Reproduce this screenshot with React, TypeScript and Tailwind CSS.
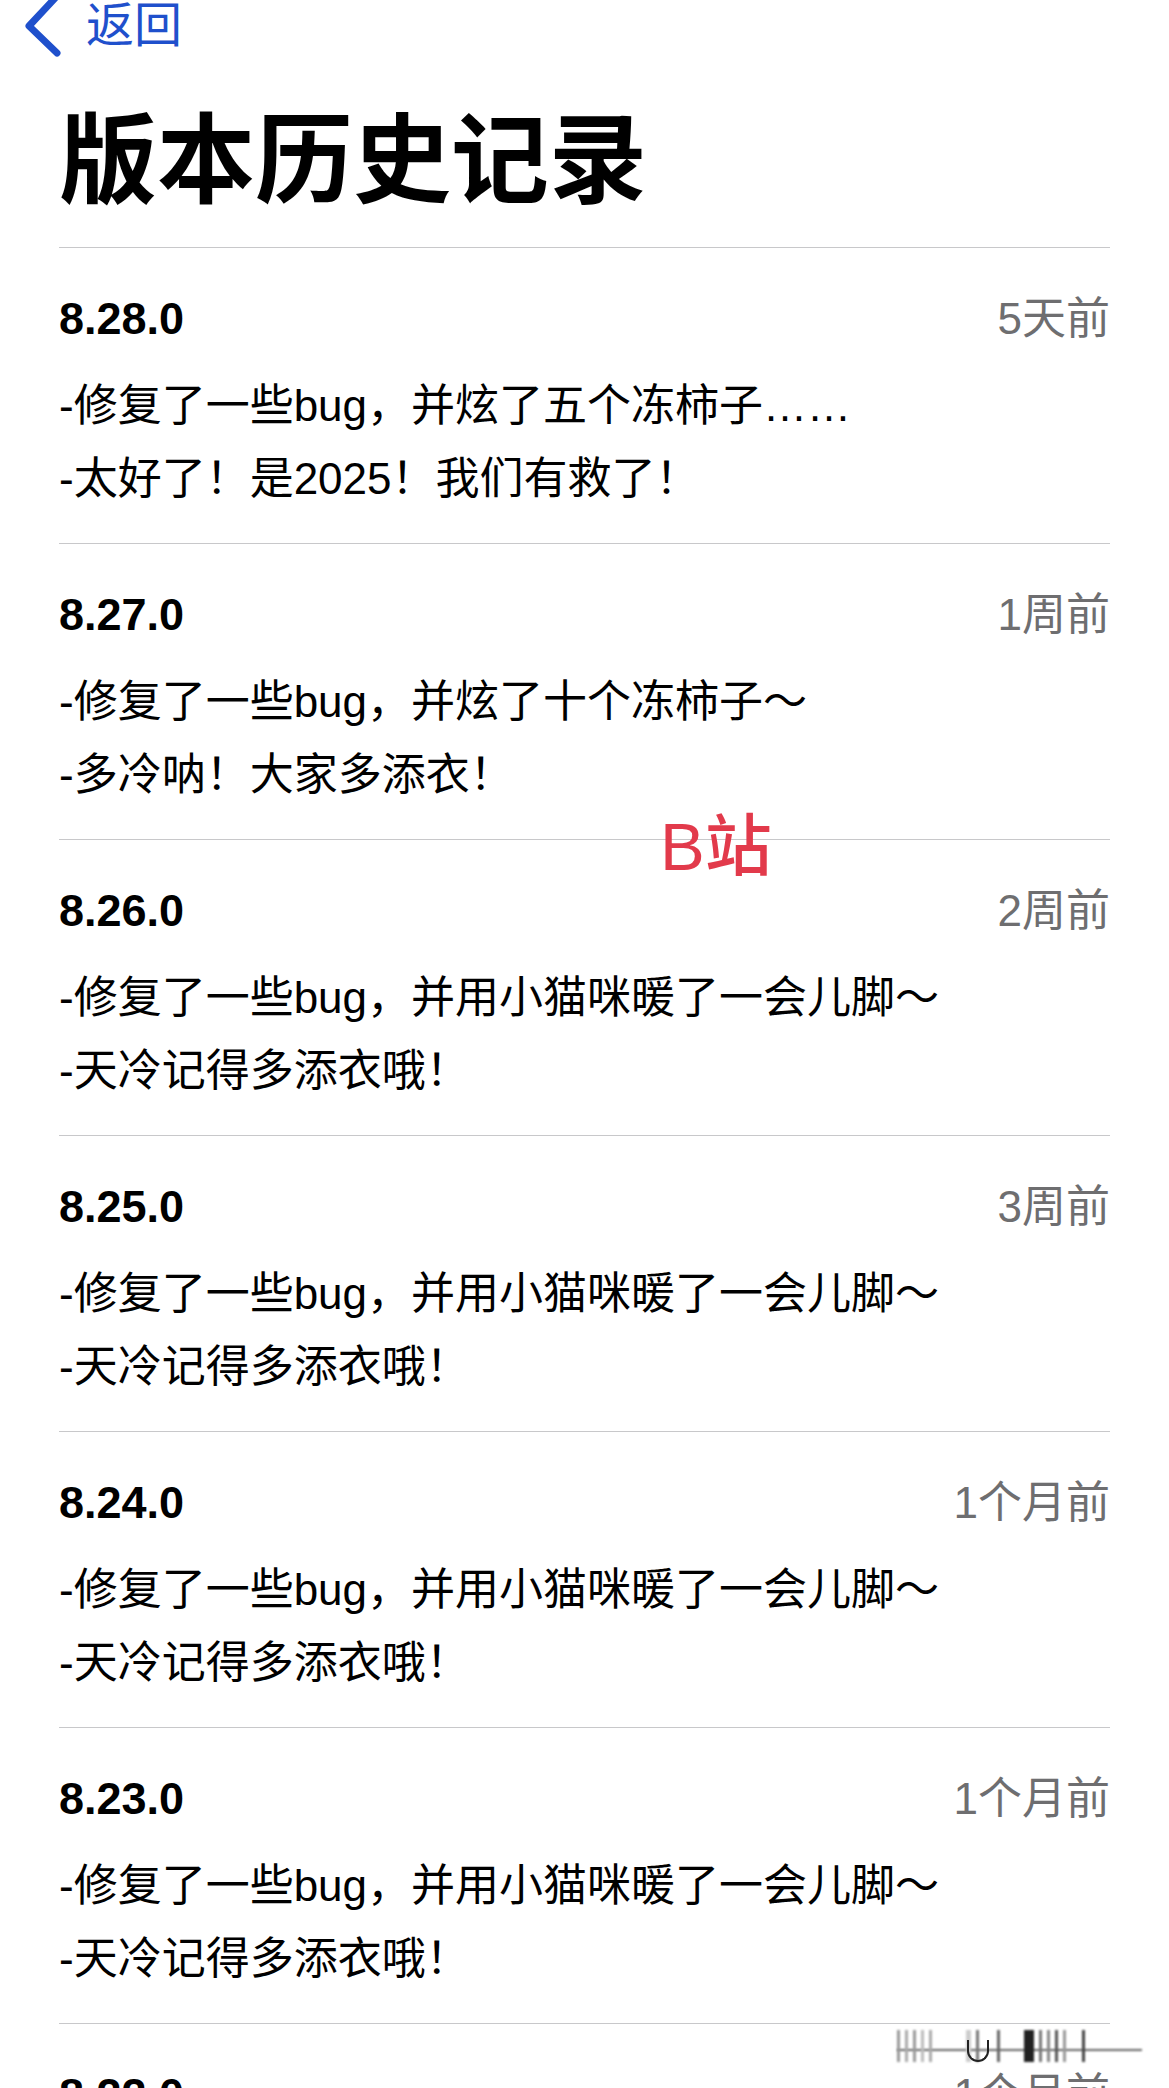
import React from "react";

const entries = [
  {
    version: "8.28.0",
    ago: "5天前",
    lines: ["-修复了一些bug，并炫了五个冻柿子……", "-太好了！是2025！我们有救了！"],
  },
  {
    version: "8.27.0",
    ago: "1周前",
    lines: ["-修复了一些bug，并炫了十个冻柿子～", "-多冷呐！大家多添衣！"],
  },
  {
    version: "8.26.0",
    ago: "2周前",
    lines: ["-修复了一些bug，并用小猫咪暖了一会儿脚～", "-天冷记得多添衣哦！"],
  },
  {
    version: "8.25.0",
    ago: "3周前",
    lines: ["-修复了一些bug，并用小猫咪暖了一会儿脚～", "-天冷记得多添衣哦！"],
  },
  {
    version: "8.24.0",
    ago: "1个月前",
    lines: ["-修复了一些bug，并用小猫咪暖了一会儿脚～", "-天冷记得多添衣哦！"],
  },
  {
    version: "8.23.0",
    ago: "1个月前",
    lines: ["-修复了一些bug，并用小猫咪暖了一会儿脚～", "-天冷记得多添衣哦！"],
  },
  {
    version: "8.22.0",
    ago: "1个月前",
    lines: ["-修复了一些bug，并用小猫咪暖了一会儿脚～", "-天冷记得多添衣哦！"],
  },
];

const font = "font-['Liberation_Sans','Noto_Sans_CJK_SC',sans-serif]";

function Entry({ version, ago, lines }: { version: string; ago: string; lines: string[] }) {
  return (
    <div className="border-t border-[#c8c8ca] pt-[45px] pb-[28px]">
      <div className="flex items-center justify-between h-[52px]">
        <span className="text-[45px] leading-[52px] font-semibold text-black">{version}</span>
        <span className="text-[44px] leading-[52px] text-[#6e6e70]">{ago}</span>
      </div>
      <div className="mt-[24px] text-[44px] leading-[73px] text-black">
        {lines.map((l, i) => (
          <div key={i}>{l}</div>
        ))}
      </div>
    </div>
  );
}

export default function App() {
  return (
    <div className={`relative h-[2088px] w-full overflow-hidden bg-white ${font}`}>
      {/* back */}
      <div className="flex items-center h-[54px] pl-[22px] -mt-[1px]">
        <svg width="40" height="56" viewBox="0 0 40 56" className="overflow-visible">
          <polyline
            points="35,-2 7,28 35,55"
            fill="none"
            stroke="#1f50cc"
            strokeWidth="7"
            strokeLinecap="round"
            strokeLinejoin="round"
          />
        </svg>
        <span className="ml-[24px] text-[48px] leading-[54px] text-[#1f50cc]">返回</span>
      </div>

      <div className="px-[59px]">
        <h1 className="mt-[59px] mb-[37px] text-[98px] leading-[98px] font-bold text-black">
          版本历史记录
        </h1>
        {entries.map((e) => (
          <Entry key={e.version} {...e} />
        ))}
      </div>

      {/* watermark */}
      <div className="absolute left-[660px] top-[807px] text-[67px] leading-[80px] font-medium text-[#e23a4b]">
        B站
      </div>

      {/* blurred corner watermark */}
      <div className="absolute left-[897px] top-[2030px] w-[245px] h-[32px]">
        <div className="absolute left-0 right-0 top-[19px] h-[2px] bg-[#666] blur-[1px]" />
        <div className="absolute inset-0 flex items-stretch gap-[5px] blur-[1.2px]">
          <div className="w-[3px] bg-[#999]" />
          <div className="w-[3px] bg-[#aaa]" />
          <div className="w-[3px] bg-[#999]" />
          <div className="w-[3px] bg-[#bbb]" />
          <div className="w-[3px] bg-[#aaa]" />
          <div className="w-[24px]" />
          <div className="w-[5px] bg-[#ccc]" />
          <div className="w-[3px] bg-[#777]" />
          <div className="w-[8px]" />
          <div className="w-[3px] bg-[#666]" />
          <div className="w-[14px]" />
          <div className="w-[10px] bg-[#222]" />
          <div className="w-[3px] bg-[#777]" />
          <div className="w-[3px] bg-[#888]" />
          <div className="w-[3px] bg-[#555]" />
          <div className="w-[3px] bg-[#999]" />
          <div className="w-[6px]" />
          <div className="w-[3px] bg-[#444]" />
        </div>
        <div className="absolute left-[70px] top-[10px] w-[22px] h-[22px] border-b-2 border-l-2 border-r-2 border-[#222] rounded-b-full" />
      </div>
    </div>
  );
}
